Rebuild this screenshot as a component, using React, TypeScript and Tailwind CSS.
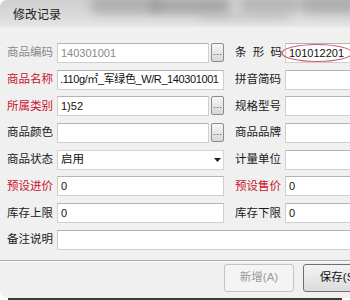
import React from "react";

const FONT = { fontFamily: '"Liberation Sans", "Noto Sans CJK SC", sans-serif' };

function Dots() {
  return (
    <div className="ml-[2px] flex h-[19px] w-[13px] shrink-0 items-end justify-center rounded-[2px] border border-[#8c8c8c] bg-gradient-to-b from-[#f6f6f6] to-[#d8d8d8] pb-[2px] text-[9px] leading-none text-[#333]">
      ···
    </div>
  );
}

function Input({ children, gray }: { children?: React.ReactNode; gray?: boolean }) {
  return (
    <div
      className={
        "flex h-[20px] min-w-0 flex-1 items-center overflow-hidden whitespace-nowrap border border-[#cfcfcf] border-t-[#b4b4b4] bg-white pl-[3px] text-[11px] " +
        (gray ? "text-[#8a8a8a]" : "text-[#111]")
      }
    >
      {children}
    </div>
  );
}

function Label({ children, color }: { children: React.ReactNode; color?: string }) {
  return (
    <div
      className={
        "flex w-[47px] shrink-0 items-center justify-end whitespace-nowrap text-[11.5px] " +
        (color ?? "text-[#1a1a1a]")
      }
    >
      {children}
    </div>
  );
}

export default function App() {
  return (
    <div className="relative h-[300px] w-[350px] overflow-hidden bg-white" style={FONT}>
      <div className="flex h-[298px] flex-col overflow-hidden rounded-tl-[7px] rounded-bl-[8px] bg-[#f0f0f0]">
        {/* title bar */}
        <div className="relative h-[28px] shrink-0 overflow-hidden bg-gradient-to-b from-[#cfcfcf] via-[#d9d9d9] to-[#e6e6e6]">
          <div className="absolute left-[90px] top-[-4px] h-[18px] w-[70px] rounded-full bg-[#9a9a9a] opacity-60 blur-[5px]" />
          <div className="absolute left-[150px] top-[-2px] h-[16px] w-[80px] rounded-full bg-[#8a8a8a] opacity-60 blur-[5px]" />
          <div className="absolute left-[240px] top-[-2px] h-[14px] w-[60px] rounded-full bg-[#999] opacity-50 blur-[5px]" />
          <div className="absolute left-[300px] top-[-4px] h-[18px] w-[60px] rounded-full bg-[#8c8c8c] opacity-50 blur-[5px]" />
          <div className="absolute left-[200px] top-[12px] h-[8px] w-[90px] rounded-full bg-[#aaa] opacity-40 blur-[4px]" />
          <div className="absolute bottom-0 left-0 right-0 h-[3px] bg-gradient-to-b from-[#e2e2e2] to-[#f0f0f0]" />
          <div className="relative pl-[13px] pt-[6px] text-[12px] text-[#1a1a1a]">修改记录</div>
        </div>

        {/* form */}
        <div className="flex flex-col gap-[6.7px] pl-[6px] pt-[15px]">
          <div className="flex h-[20px]">
            <Label color="text-[#8a8a8a]">商品编码</Label>
            <div className="ml-[4px] flex w-[167px] shrink-0">
              <Input gray>140301001</Input>
              <Dots />
            </div>
            <div className="ml-[11px] flex w-[47px] shrink-0 items-center justify-between text-[11.5px] text-[#1a1a1a]">
              <span>条</span>
              <span>形</span>
              <span>码</span>
            </div>
            <div className="ml-[3px] flex w-[80px] shrink-0">
              <Input>101012201</Input>
            </div>
          </div>

          <div className="flex h-[20px]">
            <Label color="text-[#c8102e]">商品名称</Label>
            <div className="ml-[4px] flex w-[167px] shrink-0">
              <div className="flex h-[20px] min-w-0 flex-1 items-center overflow-hidden border border-[#cfcfcf] border-t-[#b4b4b4] bg-white pl-[2px] text-[11px] tracking-[-0.4px] text-[#111]">
                <span className="whitespace-nowrap">.110g/㎡_军绿色_W/R_140301001</span>
              </div>
            </div>
            <div className="ml-[11px] flex w-[47px] shrink-0 items-center text-[11.5px] text-[#1a1a1a]">拼音简码</div>
            <div className="ml-[3px] flex w-[80px] shrink-0">
              <Input />
            </div>
          </div>

          <div className="flex h-[20px]">
            <Label color="text-[#c8102e]">所属类别</Label>
            <div className="ml-[4px] flex w-[167px] shrink-0">
              <Input>1)52</Input>
              <Dots />
            </div>
            <div className="ml-[11px] flex w-[47px] shrink-0 items-center text-[11.5px] text-[#1a1a1a]">规格型号</div>
            <div className="ml-[3px] flex w-[80px] shrink-0">
              <Input />
            </div>
          </div>

          <div className="flex h-[20px]">
            <Label>商品颜色</Label>
            <div className="ml-[4px] flex w-[167px] shrink-0">
              <Input />
              <Dots />
            </div>
            <div className="ml-[11px] flex w-[47px] shrink-0 items-center text-[11.5px] text-[#1a1a1a]">商品品牌</div>
            <div className="ml-[3px] flex w-[80px] shrink-0">
              <Input />
            </div>
          </div>

          <div className="flex h-[20px]">
            <Label>商品状态</Label>
            <div className="ml-[4px] flex w-[167px] shrink-0">
              <div className="flex h-[20px] flex-1 items-center justify-between border border-[#d4d4d4] bg-white pl-[3px] pr-[2px] text-[11.5px] text-[#111]">
                <span>启用</span>
                <svg width="7" height="4" viewBox="0 0 7 4">
                  <path d="M0 0 H7 L3.5 4 Z" fill="#222" />
                </svg>
              </div>
            </div>
            <div className="ml-[11px] flex w-[47px] shrink-0 items-center text-[11.5px] text-[#1a1a1a]">计量单位</div>
            <div className="ml-[3px] flex w-[80px] shrink-0">
              <Input />
            </div>
          </div>

          <div className="flex h-[20px]">
            <Label color="text-[#c8102e]">预设进价</Label>
            <div className="ml-[4px] flex w-[167px] shrink-0">
              <Input>0</Input>
            </div>
            <div className="ml-[11px] flex w-[47px] shrink-0 items-center text-[11.5px] text-[#c8102e]">预设售价</div>
            <div className="ml-[3px] flex w-[80px] shrink-0">
              <Input>0</Input>
            </div>
          </div>

          <div className="flex h-[20px]">
            <Label>库存上限</Label>
            <div className="ml-[4px] flex w-[167px] shrink-0">
              <Input>0</Input>
            </div>
            <div className="ml-[11px] flex w-[47px] shrink-0 items-center text-[11.5px] text-[#1a1a1a]">库存下限</div>
            <div className="ml-[3px] flex w-[80px] shrink-0">
              <Input>0</Input>
            </div>
          </div>

          <div className="flex h-[20px]">
            <Label>备注说明</Label>
            <div className="ml-[4px] flex w-[310px] shrink-0">
              <Input />
            </div>
          </div>
        </div>

        {/* divider */}
        <div className="mt-[10px] h-[2px] shrink-0 border-t border-[#a8a8a8] bg-white" />

        {/* buttons */}
        <div className="flex w-max pl-[224px] pt-[2px]">
          <div className="flex h-[28px] w-[70px] shrink-0 items-center justify-center rounded-[3px] border border-[#c4c4c4] bg-[#f4f4f4] text-[11.5px] text-[#9a9a9a]">
            新增(A)
          </div>
          <div className="ml-[9px] flex h-[28px] w-[72px] shrink-0 items-center justify-center rounded-[3px] border border-[#707070] bg-gradient-to-b from-[#f4f4f4] to-[#dcdcdc] text-[11.5px] text-[#111]">
            保存(S)
          </div>
        </div>
      </div>
      <div className="mx-[8px] h-[2px] bg-[#3a3a3a]" />

      {/* annotation ellipse */}
      <svg className="absolute left-[279px] top-[42px]" width="80" height="22" viewBox="0 0 80 22">
        <ellipse cx="38" cy="11" rx="35" ry="8.5" fill="none" stroke="#d05a6a" strokeWidth="1.2" />
      </svg>
    </div>
  );
}
